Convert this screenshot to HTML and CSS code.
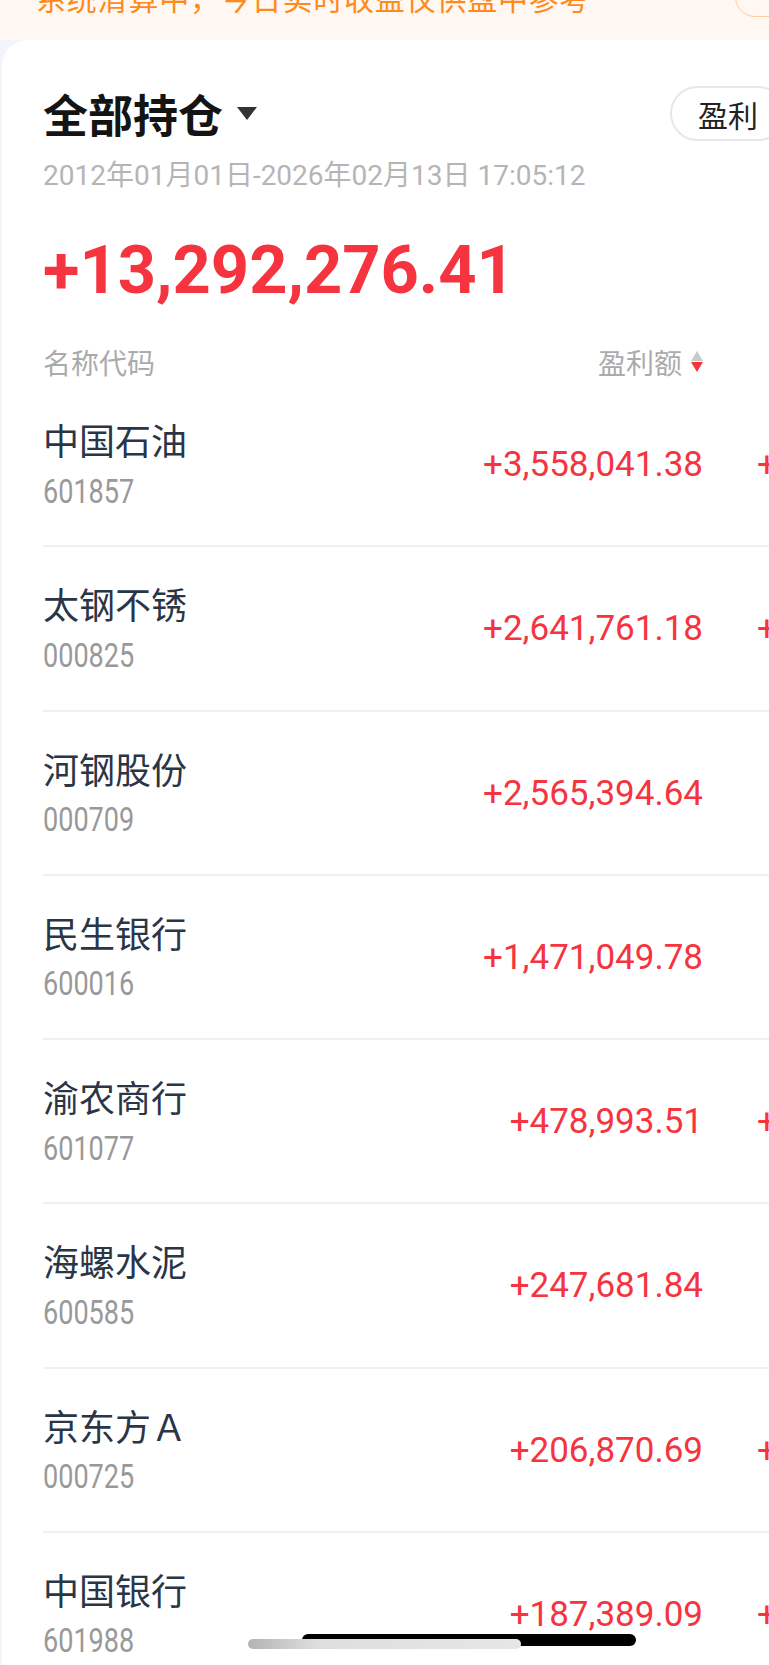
FILE: index.html
```html
<!DOCTYPE html>
<html lang="zh-CN">
<head>
  <meta charset="UTF-8">
  <title>全部持仓</title>
  <link rel="stylesheet" href="styles.css">
</head>
<body>
  <div class="banner">
    <p class="banner-text">系统清算中，今日实时收益仅供盘中参考</p>
    <span class="banner-btn">
      <svg width="20" height="20" viewBox="0 0 20 20"><path d="M3 18 L17 4 L15 18 Z" fill="#ff8a1c"/></svg>
    </span>
  </div>

  <div class="card">
    <div class="head">
      <div class="title-wrap">
        <h1 class="title">全部持仓</h1>
        <span class="caret"></span>
      </div>
      <button class="tab">盈利</button>
    </div>
    <div class="period">2012年01月01日-2026年02月13日 17:05:12</div>
    <div class="total">+13,292,276.41</div>

    <div class="list-head">
      <span>名称代码</span>
      <span class="sort-col">盈利额<span class="sort"><i class="up"></i><i class="down"></i></span></span>
    </div>

    <ul class="list">
      <li class="row">
        <div class="stock"><div class="stock-name">中国石油</div><div class="stock-code">601857</div></div>
        <div class="profit">+3,558,041.38</div>
        <div class="rate">+136.52%</div>
      </li>
      <li class="row">
        <div class="stock"><div class="stock-name">太钢不锈</div><div class="stock-code">000825</div></div>
        <div class="profit">+2,641,761.18</div>
        <div class="rate">+118.04%</div>
      </li>
      <li class="row">
        <div class="stock"><div class="stock-name">河钢股份</div><div class="stock-code">000709</div></div>
        <div class="profit">+2,565,394.64</div>
        <div class="rate">+84.71%</div>
      </li>
      <li class="row">
        <div class="stock"><div class="stock-name">民生银行</div><div class="stock-code">600016</div></div>
        <div class="profit">+1,471,049.78</div>
        <div class="rate">+43.26%</div>
      </li>
      <li class="row">
        <div class="stock"><div class="stock-name">渝农商行</div><div class="stock-code">601077</div></div>
        <div class="profit">+478,993.51</div>
        <div class="rate">+102.87%</div>
      </li>
      <li class="row">
        <div class="stock"><div class="stock-name">海螺水泥</div><div class="stock-code">600585</div></div>
        <div class="profit">+247,681.84</div>
        <div class="rate">+31.45%</div>
      </li>
      <li class="row">
        <div class="stock"><div class="stock-name">京东方Ａ</div><div class="stock-code">000725</div></div>
        <div class="profit">+206,870.69</div>
        <div class="rate">+157.33%</div>
      </li>
      <li class="row">
        <div class="stock"><div class="stock-name">中国银行</div><div class="stock-code">601988</div></div>
        <div class="profit">+187,389.09</div>
        <div class="rate">+109.68%</div>
      </li>
    </ul>
  </div>

  <div class="home-bar">
    <span class="bar-dark"></span>
    <span class="bar-light"></span>
  </div>
</body>
</html>
```

FILE: styles.css
```css
html, body {
  overflow: hidden;
}

body {
  margin: 0;
  padding: 0;
  background-color: #f2f6fa;
  font-family: "Noto Sans CJK SC", sans-serif;
}

/* top notice */
.banner {
  display: flex;
  height: 40px;
  overflow: hidden;
  background-color: #fff7f1;
}

.banner-text {
  margin: -18px 0 0 0;
  padding-left: 36px;
  font-size: 30px;
  line-height: 30px;
  letter-spacing: 0.8px;
  color: #ff8a1c;
  white-space: nowrap;
}

.banner-btn {
  flex: none;
  display: flex;
  align-items: flex-end;
  justify-content: flex-start;
  width: 100px;
  height: 40px;
  margin: -23px -66px 0 auto;
  padding: 0 0 20px 20px;
  box-sizing: border-box;
  border: 1.5px solid #ffcd9c;
  border-radius: 20px;
}

/* card */
.card {
  width: 1000px;
  margin-left: 2px;
  padding: 46px 0 0 41px;
  background-color: #ffffff;
  border-top-left-radius: 26px;
}

.head {
  display: flex;
  align-items: center;
  height: 55px;
}

.title-wrap {
  display: flex;
  align-items: center;
  flex: 0 0 627px;
}

.title {
  margin: 0;
  font-size: 45px;
  line-height: 55px;
  font-weight: 700;
  color: #141414;
}

.caret {
  width: 0;
  height: 0;
  margin-left: 14px;
  border-left: 10.5px solid transparent;
  border-right: 10.5px solid transparent;
  border-top: 13px solid #333;
}

.tab {
  height: 55px;
  padding: 0 26px;
  border: 2px solid #e4e8ed;
  border-radius: 28px;
  background: #fff;
  font-family: "Noto Sans CJK SC", sans-serif;
  font-size: 30px;
  color: #222;
}

.period {
  margin-top: 18px;
  font-family: Roboto, "Noto Sans CJK SC", sans-serif;
  font-size: 28px;
  line-height: 34px;
  color: #b5b5b5;
}

.total {
  margin-top: 42px;
  font-family: Roboto, sans-serif;
  font-size: 66.8px;
  line-height: 70px;
  font-weight: 700;
  color: #f5343f;
}

/* list */
.list-head {
  display: flex;
  align-items: center;
  justify-content: space-between;
  width: 660px;
  height: 38.5px;
  margin-top: 37.5px;
  margin-bottom: 2px;
  font-size: 28px;
  line-height: 38px;
  color: #ababab;
}

.sort-col {
  display: flex;
  align-items: center;
  gap: 9px;
}

.sort {
  display: flex;
  flex-direction: column;
  gap: 1px;
}

.sort i {
  width: 0;
  height: 0;
  border-left: 6px solid transparent;
  border-right: 6px solid transparent;
}

.sort .up {
  border-bottom: 10px solid #c9c9c9;
}

.sort .down {
  border-top: 10px solid #f5343f;
}

.list {
  margin: 0;
  padding: 0;
  list-style: none;
}

.row {
  display: flex;
  align-items: center;
  height: 164.25px;
  box-sizing: border-box;
  border-bottom: 2px solid #f0f0f0;
}

.stock {
  flex: 0 0 360px;
  align-self: flex-start;
  padding-top: 34px;
}

.stock-name {
  font-size: 36px;
  line-height: 44px;
  color: #2a3546;
}

/* codes use a condensed digit face in the app */
.stock-code {
  margin-top: 12.6px;
  font-family: Roboto, sans-serif;
  font-size: 33px;
  line-height: 36px;
  color: #999;
  transform: scaleX(0.82);
  transform-origin: left center;
}

.profit,
.rate {
  font-family: Roboto, sans-serif;
  font-size: 35px;
  line-height: 40px;
  color: #f5343f;
  text-align: right;
  margin-top: 2px;
}

.profit {
  flex: 0 0 300px;
}

.rate {
  flex: 0 0 207px;
}

/* gesture bar */
.home-bar span {
  position: absolute;
  border-radius: 6px;
}

.bar-dark {
  left: 302px;
  top: 1634px;
  width: 334px;
  height: 12px;
  background: #000;
}

.bar-light {
  left: 248px;
  top: 1639px;
  width: 273px;
  height: 10px;
  background: linear-gradient(90deg, #b3b3b3, #dedede 25%, #e6e6e6);
}
```
